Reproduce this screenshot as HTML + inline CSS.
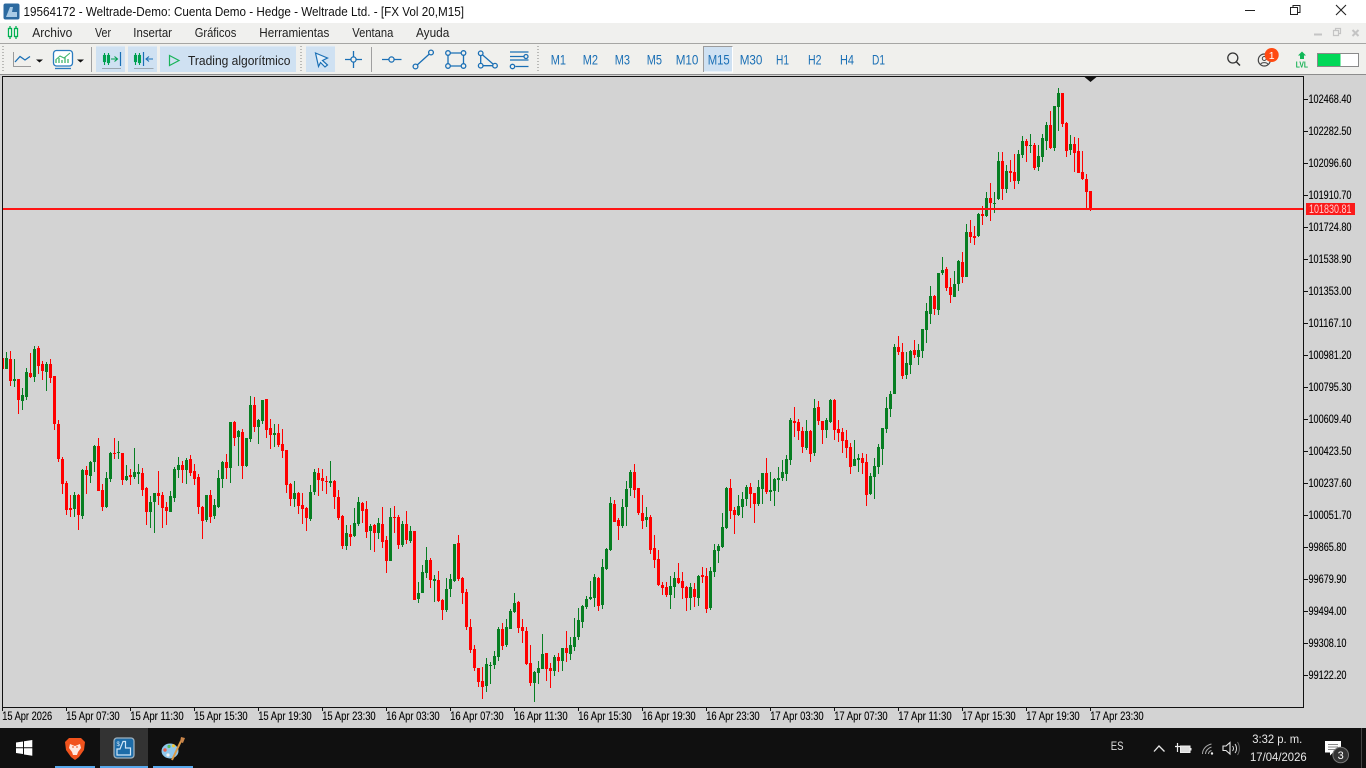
<!DOCTYPE html>
<html lang="es"><head><meta charset="utf-8"><title>MT5</title>
<style>
html,body{margin:0;padding:0;width:1366px;height:768px;overflow:hidden;background:#d3d3d3}
svg{display:block;position:absolute;left:0;top:0}
text{font-family:"Liberation Sans",sans-serif;white-space:pre}
.m{font-size:12.5px;fill:#222}
.tf{font-size:13.5px;fill:#1a6fb5}
.a{font-size:11.5px;fill:#000;stroke:#000;stroke-width:.12}
.ic{fill:none;stroke:#1a6fb5;stroke-width:1.3}
.ic circle{fill:#f0f0ed}
</style></head>
<body>
<svg width="1366" height="768" viewBox="0 0 1366 768" xmlns="http://www.w3.org/2000/svg">
<defs><clipPath id="cc"><rect x="3" y="77" width="1301" height="630"/></clipPath></defs>
<!-- title bar -->
<rect width="1366" height="23" fill="#fff"/>
<rect x="3.5" y="3.5" width="16" height="16" rx="2" fill="#2c6aa0"/>
<path d="M6 17 L10 7 L13 7 L12 12 L17 12 L17 17Z" fill="#a9cbe6"/>
<text x="23.5" y="16" font-size="12.5" fill="#111" textLength="440.5" lengthAdjust="spacingAndGlyphs">19564172 - Weltrade-Demo: Cuenta Demo - Hedge - Weltrade Ltd. - [FX Vol 20,M15]</text>
<path d="M1245 10.5H1255" stroke="#222" fill="none"/>
<path d="M1290.5 7.5h7v7h-7z M1293 7.5v-2h7v7h-2.5" stroke="#222" fill="none" stroke-width="1"/>
<path d="M1336 5L1346 15M1346 5L1336 15" stroke="#222" fill="none" stroke-width="1.1"/>
<!-- menu -->
<rect y="23" width="1366" height="20" fill="#f0f0ee"/>
<rect y="43" width="1366" height="1" fill="#a6a6a4"/>
<g stroke="#00b050" fill="none" stroke-width="1.3">
<path d="M10 26v13M16 26v13"/><rect x="8.5" y="28.5" width="3" height="8" fill="#fff"/><rect x="14.5" y="28.5" width="3" height="8" fill="#fff"/></g>
<text class="m" x="32.3" y="37" textLength="40" lengthAdjust="spacingAndGlyphs">Archivo</text>
<text class="m" x="95" y="37" textLength="16" lengthAdjust="spacingAndGlyphs">Ver</text>
<text class="m" x="133.3" y="37" textLength="38.7" lengthAdjust="spacingAndGlyphs">Insertar</text>
<text class="m" x="194.7" y="37" textLength="41.6" lengthAdjust="spacingAndGlyphs">Gráficos</text>
<text class="m" x="259.3" y="37" textLength="70" lengthAdjust="spacingAndGlyphs">Herramientas</text>
<text class="m" x="352.3" y="37" textLength="41" lengthAdjust="spacingAndGlyphs">Ventana</text>
<text class="m" x="416" y="37" textLength="33.3" lengthAdjust="spacingAndGlyphs">Ayuda</text>
<g fill="none" stroke="#c4c4c4"><path d="M1314 34.5h8" stroke-width="2"/><path d="M1333.5 30.5h5v5h-5z M1335.5 30.5v-2h5v5h-2" stroke-width="1.2"/><path d="M1352.5 30l6 6M1358.5 30l-6 6" stroke-width="2"/></g>
<!-- toolbar -->
<rect y="44" width="1366" height="30" fill="#f0f0ed"/>
<rect y="74" width="1366" height="1" fill="#8d8d8d"/>
<g stroke="#b9b9b6" stroke-width="2" stroke-dasharray="1 2" fill="none"><path d="M3 46V73M301 46V73M538 46V73"/></g>
<g fill="none" stroke="#9a9a9a"><path d="M13.5 52V66.5H31"/><path d="M91.5 47V72M371.5 47V72" stroke="#a0a0a0"/></g>
<path d="M15 62L20 56.5 25 60 30 56.5" class="ic"/>
<path d="M36 59.5H43L39.5 62.5ZM77 59.5H84L80.5 62.5Z" fill="#111"/>
<rect x="53.5" y="50.5" width="19" height="15.5" rx="3" fill="#fff" stroke="#2b7cc0" stroke-width="1.3"/>
<path d="M55 68.5H71" stroke="#2b7cc0" stroke-width="1.3"/>
<path d="M56 63v-3M59 63v-5M62 63v-3M65 63v-6M68 63v-4" stroke="#3fb56b" stroke-width="1.3"/>
<path d="M55.5 60L60 56 64 58 70 53" stroke="#3fb56b" fill="none"/>
<!-- buttons -->
<rect x="96" y="46" width="29" height="26" fill="#cfe1f2"/><rect x="128" y="46" width="29" height="26" fill="#cfe1f2"/>
<rect x="160" y="46" width="136" height="26" fill="#cfe1f2"/><rect x="306" y="46" width="29" height="26" fill="#cfe1f2"/>
<path d="M96 46H125M128 46H157M160 46H296M306 46H335" stroke="#e8eef4"/>
<g fill="none" stroke="#00a050" stroke-width="1.1"><path d="M104.5 53v12M108.5 53v12"/><rect x="103.5" y="55.5" width="2" height="6"/><rect x="107.5" y="55.5" width="2" height="7"/><path d="M111 59h6M114.5 56.5l3 2.5-3 2.5"/>
<path d="M135.5 53v12M139.5 53v12"/><rect x="134.5" y="55.5" width="2" height="6"/><rect x="138.5" y="55.5" width="2" height="7"/></g>
<path d="M120.5 52V66M143.5 52V66" stroke="#1a6fb5" stroke-width="1.2"/>
<path d="M153 59h-7M149 56.5l-3 2.5 3 2.5" stroke="#1a6fb5" fill="none" stroke-width="1.1"/>
<path d="M102 68.5H121M134 68.5H153.5" stroke="#9aa6b0"/>
<path d="M169.5 55.5L179 60.5 169.5 65.5Z" fill="none" stroke="#19b35a" stroke-width="1.2"/>
<text x="188" y="65" font-size="12.5" fill="#222" textLength="102.5" lengthAdjust="spacingAndGlyphs">Trading algorítmico</text>
<path d="M315.5 53L327.5 58 322.5 60.5 327.5 65 325 67 320.5 62.5 318.5 66.5Z" fill="#e4f0fa" stroke="#1a6fb5" stroke-width="1.2"/>
<g class="ic">
<path d="M345 59.5H350.7M356.3 59.5H362M353.5 51V56.7M353.5 62.3V68"/><circle cx="353.5" cy="59.5" r="2.6"/>
<path d="M382 59.5H401.5"/><circle cx="391.5" cy="59.5" r="2.6"/>
<path d="M415.5 66.5L431 52.5"/><circle cx="415.5" cy="66.5" r="2.4"/><circle cx="431" cy="52.5" r="2.4"/>
<path d="M448 53H463.5V66H448Z"/><circle cx="448" cy="53" r="2.3"/><circle cx="463.5" cy="53" r="2.3"/><circle cx="448" cy="66" r="2.3"/><circle cx="463.5" cy="66" r="2.3"/>
<path d="M480.7 53.3V65.7H495Z"/><circle cx="480.7" cy="53.3" r="2.3"/><circle cx="480.7" cy="65.7" r="2.3"/><circle cx="495" cy="65.7" r="2.3"/>
<path d="M510 52H528.5M510 56.5H524M510 60H528.5M515.5 66.5H528.5"/><circle cx="526" cy="56.5" r="2"/><circle cx="512.5" cy="66.5" r="2.2"/>
</g>
<rect x="703.5" y="46.5" width="29" height="25.5" fill="#cfe1f2" stroke="#fff"/>
<path d="M703.5 72V46.5H732.5" stroke="#9c9c9c" fill="none"/>
<text class="tf" x="550.7" y="64.5" textLength="15.3" lengthAdjust="spacingAndGlyphs">M1</text>
<text class="tf" x="582.7" y="64.5" textLength="15.3" lengthAdjust="spacingAndGlyphs">M2</text>
<text class="tf" x="614.7" y="64.5" textLength="15.3" lengthAdjust="spacingAndGlyphs">M3</text>
<text class="tf" x="646.7" y="64.5" textLength="15.3" lengthAdjust="spacingAndGlyphs">M5</text>
<text class="tf" x="675.7" y="64.5" textLength="22.7" lengthAdjust="spacingAndGlyphs">M10</text>
<text class="tf" x="707.7" y="64.5" textLength="22" lengthAdjust="spacingAndGlyphs">M15</text>
<text class="tf" x="739.7" y="64.5" textLength="22.7" lengthAdjust="spacingAndGlyphs">M30</text>
<text class="tf" x="776" y="64.5" textLength="13" lengthAdjust="spacingAndGlyphs">H1</text>
<text class="tf" x="808" y="64.5" textLength="13.5" lengthAdjust="spacingAndGlyphs">H2</text>
<text class="tf" x="840" y="64.5" textLength="14" lengthAdjust="spacingAndGlyphs">H4</text>
<text class="tf" x="872" y="64.5" textLength="13" lengthAdjust="spacingAndGlyphs">D1</text>
<!-- right tools -->
<circle cx="1232.8" cy="58" r="5" fill="none" stroke="#333" stroke-width="1.3"/><path d="M1236.5 62L1240 65.5" stroke="#333" stroke-width="1.5"/>
<circle cx="1264.3" cy="60" r="6" fill="none" stroke="#444" stroke-width="1.2"/><circle cx="1264.3" cy="58.5" r="2" fill="none" stroke="#444"/><path d="M1260.5 64.5c1-2.5 6.5-2.5 7.5 0" stroke="#444" fill="none"/>
<circle cx="1271.7" cy="55" r="7" fill="#ff4a12"/>
<text x="1271.7" y="59" font-size="10.5" fill="#fff" text-anchor="middle">1</text>
<path d="M1302 51.5L1306 55.5H1304V59H1300V55.5H1298Z" fill="#10b858"/>
<text x="1295.7" y="67.5" font-size="8" font-weight="bold" fill="#10b050" textLength="12.3" lengthAdjust="spacingAndGlyphs">LVL</text>
<rect x="1317.5" y="53.5" width="41" height="13" fill="#fff" stroke="#8a8a8a"/><rect x="1318" y="54" width="22.5" height="12" fill="#00d858"/>
<!-- chart -->
<rect y="75" width="1366" height="653" fill="#d3d3d3"/>
<g clip-path="url(#cc)" shape-rendering="crispEdges">
<path id="gw" stroke="#077e22" fill="none"/><path id="rw" stroke="#ff0000" fill="none"/>
<path id="gb" fill="#077e22"/><path id="rb" fill="#ff0000"/>
</g>
<rect x="3" y="208" width="1301" height="2" fill="#ff1414"/>
<path d="M1084.5 77H1096.5L1090.5 82Z" fill="#111"/>
<rect x="2.5" y="76.5" width="1301" height="631" fill="none" stroke="#111"/>
<!-- price axis -->
<path stroke="#111" fill="none" d="M1304 99.5h4M1304 131.5h4M1304 163.5h4M1304 195.5h4M1304 227.5h4M1304 259.5h4M1304 291.5h4M1304 323.5h4M1304 355.5h4M1304 387.5h4M1304 419.5h4M1304 451.5h4M1304 483.5h4M1304 515.5h4M1304 547.5h4M1304 579.5h4M1304 611.5h4M1304 643.5h4M1304 675.5h4"/>
<text class="a" x="1308.5" y="103" textLength="43" lengthAdjust="spacingAndGlyphs">102468.40</text>
<text class="a" x="1308.5" y="135" textLength="43" lengthAdjust="spacingAndGlyphs">102282.50</text>
<text class="a" x="1308.5" y="167" textLength="43" lengthAdjust="spacingAndGlyphs">102096.60</text>
<text class="a" x="1308.5" y="199" textLength="43" lengthAdjust="spacingAndGlyphs">101910.70</text>
<text class="a" x="1308.5" y="231" textLength="43" lengthAdjust="spacingAndGlyphs">101724.80</text>
<text class="a" x="1308.5" y="263" textLength="43" lengthAdjust="spacingAndGlyphs">101538.90</text>
<text class="a" x="1308.5" y="295" textLength="43" lengthAdjust="spacingAndGlyphs">101353.00</text>
<text class="a" x="1308.5" y="327" textLength="43" lengthAdjust="spacingAndGlyphs">101167.10</text>
<text class="a" x="1308.5" y="359" textLength="43" lengthAdjust="spacingAndGlyphs">100981.20</text>
<text class="a" x="1308.5" y="391" textLength="43" lengthAdjust="spacingAndGlyphs">100795.30</text>
<text class="a" x="1308.5" y="423" textLength="43" lengthAdjust="spacingAndGlyphs">100609.40</text>
<text class="a" x="1308.5" y="455" textLength="43" lengthAdjust="spacingAndGlyphs">100423.50</text>
<text class="a" x="1308.5" y="487" textLength="43" lengthAdjust="spacingAndGlyphs">100237.60</text>
<text class="a" x="1308.5" y="519" textLength="43" lengthAdjust="spacingAndGlyphs">100051.70</text>
<text class="a" x="1308.5" y="551" textLength="38" lengthAdjust="spacingAndGlyphs">99865.80</text>
<text class="a" x="1308.5" y="583" textLength="38" lengthAdjust="spacingAndGlyphs">99679.90</text>
<text class="a" x="1308.5" y="615" textLength="38" lengthAdjust="spacingAndGlyphs">99494.00</text>
<text class="a" x="1308.5" y="647" textLength="38" lengthAdjust="spacingAndGlyphs">99308.10</text>
<text class="a" x="1308.5" y="679" textLength="38" lengthAdjust="spacingAndGlyphs">99122.20</text>
<rect x="1306" y="203" width="49" height="12" fill="#fb1a1a"/>
<text x="1309" y="213" font-size="11.5" fill="#ffd0d0" textLength="42.5" lengthAdjust="spacingAndGlyphs">101830.81</text>
<!-- time axis -->
<path stroke="#111" fill="none" d="M2.5 707v4M66.5 707v4M130.5 707v4M194.5 707v4M258.5 707v4M322.5 707v4M386.5 707v4M450.5 707v4M514.5 707v4M578.5 707v4M642.5 707v4M706.5 707v4M770.5 707v4M834.5 707v4M898.5 707v4M962.5 707v4M1026.5 707v4M1090.5 707v4"/>
<text class="a" x="2.2" y="720" textLength="50" lengthAdjust="spacingAndGlyphs">15 Apr 2026</text>
<text class="a" x="66.2" y="720" textLength="53.5" lengthAdjust="spacingAndGlyphs">15 Apr 07:30</text>
<text class="a" x="130.2" y="720" textLength="53.5" lengthAdjust="spacingAndGlyphs">15 Apr 11:30</text>
<text class="a" x="194.2" y="720" textLength="53.5" lengthAdjust="spacingAndGlyphs">15 Apr 15:30</text>
<text class="a" x="258.2" y="720" textLength="53.5" lengthAdjust="spacingAndGlyphs">15 Apr 19:30</text>
<text class="a" x="322.2" y="720" textLength="53.5" lengthAdjust="spacingAndGlyphs">15 Apr 23:30</text>
<text class="a" x="386.2" y="720" textLength="53.5" lengthAdjust="spacingAndGlyphs">16 Apr 03:30</text>
<text class="a" x="450.2" y="720" textLength="53.5" lengthAdjust="spacingAndGlyphs">16 Apr 07:30</text>
<text class="a" x="514.2" y="720" textLength="53.5" lengthAdjust="spacingAndGlyphs">16 Apr 11:30</text>
<text class="a" x="578.2" y="720" textLength="53.5" lengthAdjust="spacingAndGlyphs">16 Apr 15:30</text>
<text class="a" x="642.2" y="720" textLength="53.5" lengthAdjust="spacingAndGlyphs">16 Apr 19:30</text>
<text class="a" x="706.2" y="720" textLength="53.5" lengthAdjust="spacingAndGlyphs">16 Apr 23:30</text>
<text class="a" x="770.2" y="720" textLength="53.5" lengthAdjust="spacingAndGlyphs">17 Apr 03:30</text>
<text class="a" x="834.2" y="720" textLength="53.5" lengthAdjust="spacingAndGlyphs">17 Apr 07:30</text>
<text class="a" x="898.2" y="720" textLength="53.5" lengthAdjust="spacingAndGlyphs">17 Apr 11:30</text>
<text class="a" x="962.2" y="720" textLength="53.5" lengthAdjust="spacingAndGlyphs">17 Apr 15:30</text>
<text class="a" x="1026.2" y="720" textLength="53.5" lengthAdjust="spacingAndGlyphs">17 Apr 19:30</text>
<text class="a" x="1090.2" y="720" textLength="53.5" lengthAdjust="spacingAndGlyphs">17 Apr 23:30</text>
<!-- taskbar -->
<rect y="728" width="1366" height="40" fill="#101010"/>
<rect x="100" y="728" width="48" height="38" fill="#333"/>
<rect x="55" y="766" width="40" height="2" fill="#58a8ec"/><rect x="100" y="766" width="48" height="2" fill="#58a8ec"/><rect x="153" y="766" width="40" height="2" fill="#58a8ec"/>
<path d="M16 742.5L23 741.5V747.3H16ZM24 741.3L32.3 740V747.3H24ZM16 748.3H23V754L16 753ZM24 748.3H32.3V755.7L24 754.5Z" fill="#fff"/>
<path d="M69 738H81L85 742 84 750 79 757 75 760 71 757 66 750 65 742Z" fill="#f1531d"/>
<path d="M70 744L75 746 80 744 81 748 78 752 77 755H73L72 752 69 748Z" fill="#ffe9e0"/><path d="M72 747h2M76 747h2" stroke="#f1531d"/>
<rect x="114" y="738" width="20" height="20" rx="3" fill="#1d6ca8" stroke="#9fb0bc" stroke-width="1.3"/>
<path d="M117 755V749H120L123 741.5H125.5V748H130.5V755Z" fill="none" stroke="#cfe6f7" stroke-width="1.2"/>
<text x="116.5" y="746" font-size="6" fill="#cfe6f7">$</text>
<ellipse cx="170" cy="751" rx="8.5" ry="7.5" fill="#8fc7ec"/>
<circle cx="165" cy="750" r="1.7" fill="#e8604c"/><circle cx="169" cy="746.5" r="1.6" fill="#5cbf5a"/><circle cx="173.5" cy="745.8" r="1.6" fill="#efc83a"/><circle cx="168" cy="755" r="1.6" fill="#f2f2f2"/>
<path d="M172 760L181 741" stroke="#dd9a45" stroke-width="2"/><path d="M180 742L181 737 185 738 183 743Z" fill="#c9854a"/>
<!-- tray -->
<text x="1110.7" y="750" font-size="12" fill="#e0e0e0" textLength="12.8" lengthAdjust="spacingAndGlyphs">ES</text>
<path d="M1154 751.5L1159 746 1164.5 751.5" fill="none" stroke="#e8e8e8" stroke-width="1.3"/>
<path d="M1175 746.5H1180M1177.5 743V752" stroke="#eee" stroke-width="1.2"/>
<rect x="1180.5" y="746" width="9.5" height="6.5" fill="#ddd" stroke="#eee"/><rect x="1190" y="748" width="1.5" height="2.5" fill="#eee"/>
<path d="M1202.5 754c0-5 4-9 9-10M1205.5 754c0-3 2.5-6 6-7M1208.5 754c0-1.5 1.2-3 3-3.5" stroke="#aaa" fill="none"/><circle cx="1212" cy="753.5" r="1.2" fill="#eee"/>
<path d="M1223 746H1226L1230 742.5V754L1226 750.5H1223Z" fill="none" stroke="#e8e8e8" stroke-width="1.1"/>
<path d="M1232.5 746c1.2 1.5 1.2 3.5 0 5M1235 744c2 2.5 2 6.5 0 9" fill="none" stroke="#ddd"/><path d="M1237.5 742c2.5 4 2.5 9 0 13" fill="none" stroke="#666"/>
<text x="1252.3" y="743" font-size="12" fill="#e8e8e8" textLength="50" lengthAdjust="spacingAndGlyphs">3:32 p. m.</text>
<text x="1250" y="761" font-size="12" fill="#e8e8e8" textLength="56.7" lengthAdjust="spacingAndGlyphs">17/04/2026</text>
<path d="M1325 741H1341V752.5H1333L1330 755.5V752.5H1325Z" fill="#fff"/>
<path d="M1328 744.5H1338M1328 747H1338M1328 749.5H1335" stroke="#888"/>
<circle cx="1340.7" cy="755" r="7.8" fill="#333" stroke="#777"/>
<text x="1340.7" y="759" font-size="11" fill="#fff" text-anchor="middle">3</text>
<path d="M1361.5 728V768" stroke="#444"/>
</svg>
<script>
var S=[
[340,-1,"r54 54 86 86|g36 54 86 86|r33 57 123 138|g57 117 123 141|r117 117 180 222|g144 165 183 210|g84 96 171 180|r39 99 111 114|g18 27 111 126|r18 24 78 102|r63 72 93 120|g66 72 96 153|r57 72 114 129|r108 108 252 270|r240 252 357 366|r351 357 432 462|r423 429 510 525|r465 504 510 531|g456 465 507 531|r462 465 525 570|g387 390 528 537|r378 390 405 462|g363 366 408 429|g315 318 366 396|r294 318 453 453|r432 450 501 513|g396 414 501 504|g336 339 417 426|r294 339 342 357|g303 336 339 357|r339 339 420 435|g375 408 420 423|r387 405 411 435|g324 396 411 417|g372 396 402 432|r384 399 450 468|r441 444 516 555|g468 486 516 564|g459 459 486 579|r393 459 468 495|r456 465 504 564|r486 501 513 555|g453 468 516 516|g381 387 474 486|g351 375 390 414|r363 375 390 429|g354 360 390 432|r345 357 399 408|r372 393 417 435|r402 411 501 522"],
[390,49,"r348 351 393 447|g315 315 390 396|r300 315 381 399|g327 345 378 387|g240 264 351 354|g213 216 267 294|r192 216 234 267|g96 96 234 279|r93 96 144 168|g120 123 141 228|r117 126 228 267|g144 144 228 231|g18 45 147 156|r21 45 111 126|g87 90 111 162|g30 30 93 102|r27 27 120 144|r87 114 135 177|g102 129 135 171|r102 129 165 171|r117 162 183 204|r180 180 285 309|r279 282 327 348|g273 309 327 351|r306 309 348 372|r309 345 357 402|r351 354 384 423|g285 306 387 393|g237 246 306 315|r234 249 270 318|r237 264 273 303|r258 273 276 312|g213 273 279 291|r270 273 321 357|r300 321 384 390|r375 378 468 477|g405 429 468 480|r405 432 441 468|g354 399 438 441|g321 336 402 408|r336 339 363 399|r333 357 426 444|g402 408 423 480|r402 405 429 486|g384 399 429 447|r351 402 456 474|r438 450 513 549|g354 381 513 513|r348 381 384 429|r375 381 465 477"],
[460,99,"g183 192 255 261|r153 192 240 252|g198 213 243 249|r213 213 420 420|g366 399 417 429|g315 336 399 399|g261 300 339 354|r294 300 360 384|g345 357 363 426|r333 360 423 426|r417 420 450 480|g354 387 450 456|g342 357 387 411|g252 252 363 366|r225 249 357 363|r351 354 399 432|r387 396 501 510|r477 501 570 579|r555 567 624 633|r624 624 666 681|r621 663 681 717|g594 612 678 696|g606 615 618 672|g573 588 615 627|g501 507 591 603|r489 507 558 570|g477 501 555 561|g447 453 507 507|g399 429 456 459|r423 426 504 519|r477 501 513 549|r501 513 612 615|r555 609 669 678|g633 636 669 726|g603 624 639 672|g522 582 627 627|r579 579 627 663|r609 624 633 684|g585 591 633 648|r579 591 603 636|g564 564 603 633|r513 564 579 606|g531 555 582 600|g474 531 561 573|g444 480 531 540|g435 438 486 504|g408 417 441 447|g363 411 417 420|g342 351 414 441|r351 354 438 453"],
[390,149,"g507 531 645 657|g474 477 537 540|g321 339 480 483|r330 342 396 396|r384 390 408 450|g327 351 408 414|g273 297 351 408|g240 246 294 318|r222 246 300 324|r294 294 369 375|r315 369 393 417|g351 381 390 411|r375 381 480 492|r435 474 510 534|r480 507 585 588|r576 585 594 615|r576 591 615 621|g558 588 615 657|g546 564 591 624|r519 564 579 582|r546 573 594 627|r588 591 624 663|g579 591 624 660|r579 597 621 651|g555 558 624 648|r531 555 561 579|r534 558 657 669|g531 543 654 660|g462 480 546 561|g462 468 483 519|g369 411 471 474|g291 294 414 417|r267 294 363 387|r351 360 375 432|g315 348 375 378|g306 327 351 384|g285 291 327 348|r279 291 312 354|r309 309 342 399|g270 291 342 348|g249 249 297 342|r204 249 306 312|g246 300 306 333|g264 267 303 348|g231 264 270 306|g210 246 264 273|g195 207 252 273|g84 90 210 225|r51 93 99 141|r87 96 123 150"],
[270,199,"r471 483 531 549|g450 483 534 540|r480 483 552 576|g387 414 549 558|r393 411 453 465|r453 453 480 522|g444 450 480 504|g387 390 456 459|r387 390 480 510|r450 477 489 516|r474 486 513 549|r480 510 534 564|r519 531 591 612|g510 567 588 588|g552 564 570 606|r549 564 579 612|r552 576 675 708|g609 618 672 675|g564 588 621 687|g522 531 591 612|g474 474 537 585|g381 414 477 489|g363 372 417 441|g222 231 372 372|r198 231 246 255|r219 246 318 327|g246 279 315 327|g240 243 285 312|r210 240 255 264|g222 240 261 285|g177 177 243 264|g99 123 180 219|g48 78 132 162|r75 78 117 135|g9 9 120 135"],
[76,234,"g543 582 591 597|r573 579 636 645|r606 633 657 681|g585 624 663 663|g552 555 624 645|r528 558 603 621|g444 468 603 603|r432 468 483 501|r450 480 486 507|g411 414 480 483|r390 414 420 447|g348 366 420 423|r321 366 381 435|g348 381 384 411|g228 255 369 372|r228 255 339 372|g267 285 339 351|r252 285 291 318|r234 288 315 339|g222 234 315 324|g180 195 237 246|r189 195 210 258|g174 207 210 231|r201 207 276 282|g207 240 273 285|g174 186 243 258|g138 147 195 222|r105 147 216 219|g90 90 216 225|g36 51 93 165|r51 51 144 153|r138 141 225 243|g177 204 222 237|r183 204 231 288|r186 225 291 291|r225 288 309 312|r294 309 348 399|r345 345 402 405"]];
var P={gw:"",rw:"",gb:"",rb:""};
S.forEach(function(s){s[2].split("|").forEach(function(c,i){
 var k=s[1]+i,x=6+4*k,col=c[0],v=c.slice(1).split(" ").map(function(n){return Math.round(s[0]+n/3)});
 var bt=v[1],bb=v[2];if(bb-bt<1)bb=bt+1;
 P[col+"w"]+="M"+(x+.5)+" "+v[0]+"V"+v[3];
 P[col+"b"]+="M"+(x-1)+" "+bt+"h3V"+bb+"h-3z";
})});
for(var id in P)document.getElementById(id).setAttribute("d",P[id]);
</script>
</body></html>
